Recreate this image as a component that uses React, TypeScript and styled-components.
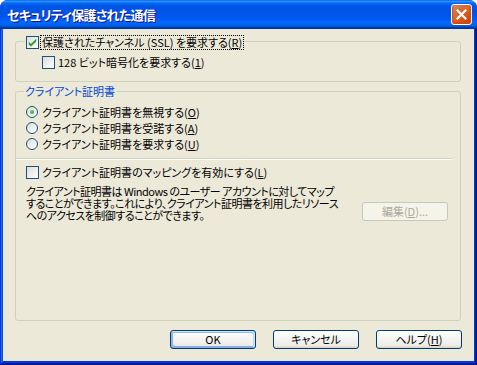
import React from "react";
import styled, { createGlobalStyle } from "styled-components";

const Global = createGlobalStyle`
  html, body { margin: 0; padding: 0; background: #fff; }
  body { font-family: "Noto Sans CJK JP", "Noto Sans", sans-serif; }
  * { box-sizing: border-box; }
`;

const FONT = `"Noto Sans CJK JP", "Noto Sans", sans-serif`;

const Window = styled.div`
  width: 477px;
  height: 365px;
  display: flex;
  flex-direction: column;
  border-radius: 8px 8px 0 0;
  overflow: hidden;
  background: #0831d9;
`;

const TitleBar = styled.div`
  height: 29px;
  flex: none;
  display: flex;
  align-items: center;
  justify-content: space-between;
  padding: 0 5px 0 7px;
  background: linear-gradient(
    to bottom,
    #0058ee 0%,
    #3593ff 4%,
    #288eff 6%,
    #127dff 8%,
    #036ffc 10%,
    #0262ee 14%,
    #0057e5 20%,
    #0054e3 24%,
    #0055eb 56%,
    #005bf5 66%,
    #026afe 76%,
    #0062ef 86%,
    #0052d6 92%,
    #0040ab 94%,
    #003092 100%
  );
`;

const TitleText = styled.span`
  font-family: ${FONT};
  font-weight: bold;
  font-size: 13px;
  color: #fff;
  letter-spacing: -0.7px;
  text-shadow: 1px 1px #0f1089;
  font-feature-settings: "palt";
`;

const CloseButton = styled.div`
  width: 21px;
  height: 21px;
  border: 1px solid #fff;
  border-radius: 3px;
  background: radial-gradient(circle at 90% 90%, #cc4600 0%, #dc6527 55%, #cd7546 70%, #e29576 100%);
  box-shadow: inset 0 -1px 2px 1px #da4600;
  display: flex;
  align-items: center;
  justify-content: center;
`;

const Frame = styled.div`
  flex: 1;
  display: flex;
  min-height: 0;
  padding: 0 3px 4px 3px;
  background: #0831d9;
  box-shadow: inset -1px -1px #00138c, inset 1px 0 #0831d9, inset -2px -2px #001ea0,
    inset 2px 0 #166aee, inset -3px -3px #003bda, inset 3px 0 #0855dd;
`;

const Content = styled.div`
  flex: 1;
  min-width: 0;
  background: #ece9d8;
  display: flex;
  flex-direction: column;
  padding: 12px 13px 0 12px;
  font-family: ${FONT};
  font-size: 11px;
  color: #000;
  font-feature-settings: "palt";
`;

const Group = styled.div<{ $h: number; $mt: number }>`
  width: 446px;
  height: ${(p) => p.$h}px;
  margin-top: ${(p) => p.$mt}px;
  border: 1px solid #d0d0bf;
  border-radius: 3px;
  padding: 0 0 0 9px;
  display: flex;
  flex-direction: column;
  flex: none;
`;

const Legend = styled.div<{ $h: number; $ml: number }>`
  align-self: flex-start;
  height: ${(p) => p.$h}px;
  margin-top: -7px;
  margin-left: ${(p) => p.$ml}px;
  padding: 0 1px;
  background: #ece9d8;
  display: flex;
  align-items: center;
`;

const LegendText = styled.span`
  color: #0046d5;
  line-height: 13px;
  white-space: nowrap;
`;

const Row = styled.div<{ $mt: number; $ml: number; $h?: number }>`
  display: flex;
  align-items: center;
  margin-top: ${(p) => p.$mt}px;
  margin-left: ${(p) => p.$ml}px;
  height: ${(p) => p.$h ?? 13}px;
  white-space: nowrap;
`;

const Label = styled.span<{ $gap: number }>`
  margin-left: ${(p) => p.$gap}px;
  line-height: 13px;
`;

const FocusLabel = styled.span`
  margin-left: 1px;
  padding: 0 1px;
  border: 1px dotted #000;
  line-height: 13px;
`;

const U = styled.span`
  text-decoration: underline;
  text-underline-offset: 1px;
`;

const Box = styled.span`
  width: 13px;
  height: 13px;
  flex: none;
  border: 1px solid #1c5180;
  background: linear-gradient(135deg, #dcdcd7 0%, #ffffff 100%);
  display: flex;
  align-items: center;
  justify-content: center;
`;

const Circle = styled.span`
  width: 12px;
  height: 12px;
  flex: none;
  border-radius: 50%;
  border: 1px solid #1c5180;
  background: linear-gradient(135deg, #dcdcd7 0%, #ffffff 100%);
  display: flex;
  align-items: center;
  justify-content: center;
`;

const Dot = styled.span`
  width: 4px;
  height: 4px;
  border-radius: 50%;
  background: radial-gradient(circle at 35% 35%, #55d751 0%, #21a121 100%);
`;

const Separator = styled.div`
  height: 2px;
  margin: 6px 8px 0 -9px;
  border-top: 1px solid #d0d0bf;
  border-bottom: 1px solid #ffffff;
  flex: none;
`;

const InfoRow = styled.div`
  display: flex;
  align-items: flex-end;
  justify-content: space-between;
  margin: 6px 12px 0 1px;
`;

const Paragraph = styled.p`
  margin: 0;
  line-height: 12px;
  letter-spacing: -0.5px;
  white-space: nowrap;
`;

const XPButton = styled.button<{ $default?: boolean; $disabled?: boolean }>`
  width: 86px;
  height: 19px;
  padding: 0;
  font-family: ${FONT};
  font-size: 11px;
  font-feature-settings: "palt";
  line-height: 13px;
  border-radius: 3px;
  border: 1px solid ${(p) => (p.$disabled ? "#c9c7ba" : "#003c74")};
  color: ${(p) => (p.$disabled ? "#aca899" : "#000")};
  background: ${(p) =>
    p.$disabled ? "#f5f4ea" : "linear-gradient(180deg, #ffffff 0%, #ecebe6 86%, #d6d0c5 100%)"};
  box-shadow: ${(p) =>
    p.$default
      ? "inset -1px 1px #cee7ff, inset 1px 2px #98b8ea, inset -2px 2px #bcd4f6, inset 1px -1px #89ade4, inset 2px -2px #89ade4"
      : "none"};
  display: flex;
  align-items: center;
  justify-content: center;
  flex: none;
`;

const ButtonRow = styled.div`
  display: flex;
  justify-content: flex-end;
  gap: 17px;
  margin: 9px -1px 0 0;
`;

const Check = () => (
  <svg width="9" height="9" viewBox="0 0 9 9">
    <path d="M0.8 3.8 L3 6 L8.2 0.8 L8.2 3.4 L3 8.6 L0.8 6.4 Z" fill="#21a121" />
  </svg>
);

const XIcon = () => (
  <svg width="11" height="11" viewBox="0 0 11 11">
    <path d="M1.5 1.5 L9.5 9.5 M9.5 1.5 L1.5 9.5" stroke="#fff" strokeWidth="2.2" strokeLinecap="square" />
  </svg>
);

const Checkbox = ({ checked }: { checked?: boolean }) => <Box>{checked ? <Check /> : null}</Box>;
const Radio = ({ checked }: { checked?: boolean }) => <Circle>{checked ? <Dot /> : null}</Circle>;

export default function App() {
  return (
    <>
      <Global />
      <Window>
        <TitleBar>
          <TitleText>セキュリティ保護された通信</TitleText>
          <CloseButton>
            <XIcon />
          </CloseButton>
        </TitleBar>
        <Frame>
          <Content>
            <Group $h={41} $mt={0}>
              <Legend $h={15} $ml={0}>
                <Checkbox checked />
                <FocusLabel>
                  保護されたチャンネル (SSL) を要求する(<U>R</U>)
                </FocusLabel>
              </Legend>
              <Row $mt={6} $ml={17}>
                <Checkbox />
                <Label $gap={3}>
                  128 ビット暗号化を要求する(<U>1</U>)
                </Label>
              </Row>
            </Group>

            <Group $h={230} $mt={9}>
              <Legend $h={13} $ml={-1}>
                <LegendText>クライアント証明書</LegendText>
              </Legend>
              <Row $mt={6} $ml={1} $h={16}>
                <Radio checked />
                <Label $gap={4}>
                  クライアント証明書を無視する(<U>O</U>)
                </Label>
              </Row>
              <Row $mt={0} $ml={1} $h={16}>
                <Radio />
                <Label $gap={4}>
                  クライアント証明書を受諾する(<U>A</U>)
                </Label>
              </Row>
              <Row $mt={0} $ml={1} $h={16}>
                <Radio />
                <Label $gap={4}>
                  クライアント証明書を要求する(<U>U</U>)
                </Label>
              </Row>
              <Separator />
              <Row $mt={6} $ml={1}>
                <Checkbox />
                <Label $gap={3}>
                  クライアント証明書のマッピングを有効にする(<U>L</U>)
                </Label>
              </Row>
              <InfoRow>
                <Paragraph>
                  クライアント証明書は Windows のユーザー アカウントに対してマップ
                  <br />
                  することができます。これにより、クライアント証明書を利用したリソース
                  <br />
                  へのアクセスを制御することができます。
                </Paragraph>
                <XPButton $disabled>
                  編集(<U>D</U>)...
                </XPButton>
              </InfoRow>
            </Group>

            <ButtonRow>
              <XPButton $default>OK</XPButton>
              <XPButton>キャンセル</XPButton>
              <XPButton>
                ヘルプ(<U>H</U>)
              </XPButton>
            </ButtonRow>
          </Content>
        </Frame>
      </Window>
    </>
  );
}
